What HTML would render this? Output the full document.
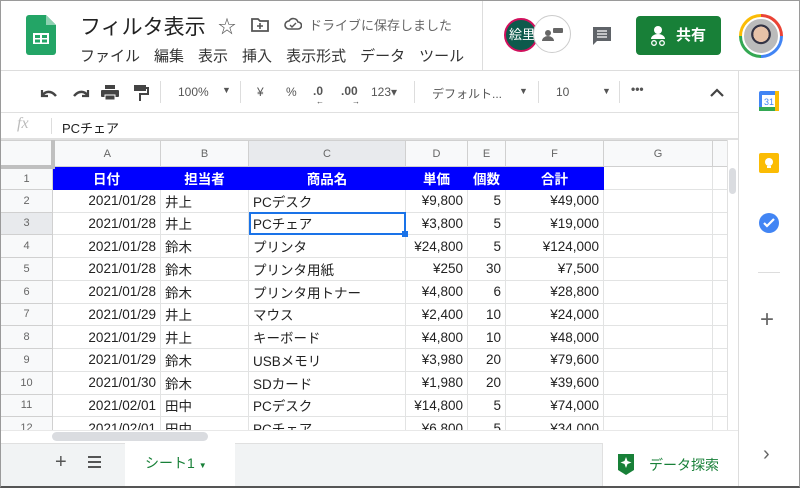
<!DOCTYPE html>
<html><head><meta charset="utf-8"><style>
*{margin:0;padding:0;box-sizing:border-box}
body{width:800px;height:488px;overflow:hidden;background:#fff;font-family:"Liberation Sans","Noto Sans CJK JP",sans-serif;position:relative;color:#222}
.frame{position:absolute;left:0;top:0;width:800px;height:488px;border:1px solid #9a9a9a;border-bottom:2px solid #555;pointer-events:none;z-index:10}
.a{position:absolute}
.menu span{margin-right:14px}
table{border-collapse:collapse;table-layout:fixed;position:absolute;left:0;top:140px;font-size:13.5px}
td{border:1px solid #e2e3e3;height:22.75px;padding:0 4px;white-space:nowrap;overflow:hidden}
td.rh{background:#f8f9fa;color:#666;text-align:center;font-size:11px;border-color:#d0d0d0}
tr.ch td{background:#f8f9fa;color:#666;text-align:center;font-size:11px;height:26px;border-color:#d0d0d0}
tr.h td.b{background:#0000ff;color:#fff;text-align:center;font-weight:bold;border-color:#0000ff}
.r{text-align:right}
.tb{color:#555;font-size:12px}
</style></head><body>
<div class="frame"></div>
<svg class="a" style="left:26px;top:15px" width="30" height="40" viewBox="0 0 30 40"><path d="M3 0h17l10 10v27a3 3 0 0 1-3 3H3a3 3 0 0 1-3-3V3a3 3 0 0 1 3-3z" fill="#23a566"/><path d="M20 0v10h10z" fill="#8ed1b1"/><rect x="7" y="18" width="16" height="11" fill="#fff"/><rect x="9" y="20" width="5" height="3" fill="#23a566"/><rect x="16" y="20" width="5" height="3" fill="#23a566"/><rect x="9" y="24.5" width="5" height="3" fill="#23a566"/><rect x="16" y="24.5" width="5" height="3" fill="#23a566"/></svg>
<div class="a" style="left:80px;top:11px;font-size:21px;color:#222">フィルタ表示</div>
<div class="a" style="left:218px;top:13px;font-size:18px;color:#555">☆</div>
<svg class="a" style="left:251px;top:17px" width="18" height="15"><path d="M1 2h6l2 2h8v10H1z" fill="none" stroke="#555" stroke-width="1.8"/><path d="M9 6v6M6 9h6" stroke="#555" stroke-width="1.6"/></svg>
<svg class="a" style="left:284px;top:17px" width="18" height="14"><path d="M5 12a4 4 0 0 1 0-8 5 5 0 0 1 9 1 3.5 3.5 0 0 1 0 7z" fill="none" stroke="#555" stroke-width="1.6"/><path d="M6 8l2 2 4-4" fill="none" stroke="#555" stroke-width="1.4"/></svg>
<div class="a" style="left:309px;top:15px;font-size:13px;color:#666">ドライブに保存しました</div>
<div class="a menu" style="left:80px;top:45px;font-size:15px;color:#333;white-space:nowrap"><span>ファイル</span><span>編集</span><span>表示</span><span>挿入</span><span>表示形式</span><span>データ</span><span>ツール</span></div>
<div class="a" style="left:482px;top:0;width:1px;height:70px;background:#ddd"></div>
<div class="a" style="left:504px;top:18px;width:34px;height:34px;border-radius:50%;background:#0d5a4c;border:2px solid #d0105c;color:#fff;font-size:13px;line-height:30px;padding-left:3px">絵里</div>
<div class="a" style="left:533px;top:15px;width:38px;height:38px;border-radius:50%;background:#fff;border:1.5px solid #ccc"><svg width="36" height="36"><circle cx="14" cy="17" r="3" fill="#666"/><path d="M8 25a6 5 0 0 1 12 0z" fill="#666"/><rect x="19" y="12" width="10" height="5" rx="1" fill="#666"/></svg></div>
<svg class="a" style="left:591px;top:25px" width="22" height="22"><path d="M2 2h18v14H6l-4 4z" fill="#5f6368"/><path d="M6 6h10M6 9h10M6 12h10" stroke="#fff" stroke-width="1.3"/></svg>
<div class="a" style="left:636px;top:16px;width:85px;height:39px;background:#188038;border-radius:4px;color:#fff;font-size:15px;font-weight:bold;line-height:39px;padding-left:40px">共有</div>
<svg class="a" style="left:648px;top:25px" width="20" height="22"><circle cx="10" cy="5" r="4" fill="#fff"/><path d="M3 14a7 5 0 0 1 14 0z" fill="#fff"/><circle cx="6" cy="18" r="2.3" fill="none" stroke="#fff" stroke-width="1.3"/><circle cx="14" cy="18" r="2.3" fill="none" stroke="#fff" stroke-width="1.3"/></svg>
<div class="a" style="left:739px;top:14px;width:44px;height:44px;border-radius:50%;background:conic-gradient(#ea4335 0 25%,#4285f4 25% 50%,#34a853 50% 75%,#fbbc05 75%);padding:3px"><div style="width:38px;height:38px;border-radius:50%;background:radial-gradient(circle at 50% 45%,#e7c2a8 0 30%,#334 31% 38%,#bbb 40%);border:2px solid #fff"></div></div>
<div class="a" style="left:0;top:70px;width:800px;height:1px;background:#ddd"></div>
<div class="a" style="left:0;top:71px;width:738px;height:42px;background:#fff"></div>
<svg class="a" style="left:38px;top:86px" width="54" height="14"><path d="M4 4v6h6" fill="none" stroke="#444" stroke-width="2.2"/><path d="M4 10c3-5 9-6 14 0" fill="none" stroke="#444" stroke-width="2.4"/><path d="M50 4v6h-6" fill="none" stroke="#444" stroke-width="2.2"/><path d="M50 10c-3-5-9-6-14 0" fill="none" stroke="#444" stroke-width="2.4"/></svg>
<svg class="a" style="left:101px;top:85px" width="18" height="16"><rect x="4" y="0" width="10" height="4" fill="#444"/><rect x="0" y="5" width="18" height="7" rx="1" fill="#444"/><rect x="4" y="10" width="10" height="5" fill="#444" stroke="#fff"/></svg>
<svg class="a" style="left:133px;top:84px" width="16" height="18"><rect x="1" y="1" width="12" height="6" fill="#444"/><path d="M13 4h2v6H7v7" fill="none" stroke="#444" stroke-width="2"/></svg>
<div class="a" style="left:160px;top:81px;width:1px;height:22px;background:#ddd"></div>
<div class="a tb" style="left:178px;top:85px">100%</div><div class="a tb" style="left:222px;top:85px;font-size:9px">▼</div>
<div class="a" style="left:240px;top:81px;width:1px;height:22px;background:#ddd"></div>
<div class="a tb" style="left:257px;top:85px">¥</div><div class="a tb" style="left:286px;top:85px">%</div>
<div class="a tb" style="left:313px;top:84px;font-weight:bold">.0</div><div class="a" style="left:316px;top:97px;font-size:8px;color:#444">←</div>
<div class="a tb" style="left:341px;top:84px;font-weight:bold">.00</div><div class="a" style="left:352px;top:97px;font-size:8px;color:#444">→</div>
<div class="a tb" style="left:371px;top:85px">123▾</div>
<div class="a" style="left:414px;top:81px;width:1px;height:22px;background:#ddd"></div>
<div class="a tb" style="left:432px;top:85px">デフォルト...</div><div class="a tb" style="left:519px;top:86px;font-size:9px">▼</div>
<div class="a" style="left:538px;top:81px;width:1px;height:22px;background:#ddd"></div>
<div class="a tb" style="left:556px;top:85px">10</div><div class="a tb" style="left:602px;top:86px;font-size:9px">▼</div>
<div class="a" style="left:619px;top:81px;width:1px;height:22px;background:#ddd"></div>
<div class="a tb" style="left:631px;top:82px;font-weight:bold">•••</div>
<svg class="a" style="left:710px;top:88px" width="14" height="9"><path d="M1 8l6-6 6 6" fill="none" stroke="#444" stroke-width="2.2"/></svg>
<div class="a" style="left:0;top:112px;width:738px;height:1px;background:#e0e0e0"></div>
<div class="a" style="left:17px;top:115px;font-family:'Liberation Serif',serif;font-style:italic;color:#bbb;font-size:16px">fx</div>
<div class="a" style="left:51px;top:118px;width:1px;height:16px;background:#ddd"></div>
<div class="a" style="left:62px;top:118px;font-size:13px">PCチェア</div>
<div class="a" style="left:0;top:138px;width:738px;height:2px;background:#e0e0e0"></div>
<table>
<colgroup><col style="width:52px"><col style="width:108px"><col style="width:88px"><col style="width:157px"><col style="width:62px"><col style="width:38px"><col style="width:98px"><col style="width:109px"><col style="width:15px"></colgroup>
<tr class="ch"><td style="border-right:4px solid #c0c0c0;border-bottom:4px solid #c0c0c0"></td><td>A</td><td>B</td><td style="background:#e8eaed">C</td><td>D</td><td>E</td><td>F</td><td>G</td><td></td></tr>
<tr class="h"><td class="rh">1</td><td class="b">日付</td><td class="b">担当者</td><td class="b">商品名</td><td class="b r">単価</td><td class="b">個数</td><td class="b">合計</td><td></td><td></td></tr>
<tr><td class="rh">2</td><td class="r">2021/01/28</td><td>井上</td><td>PCデスク</td><td class="r">¥9,800</td><td class="r">5</td><td class="r">¥49,000</td><td></td><td></td></tr>
<tr><td class="rh" style="background:#e8eaed">3</td><td class="r">2021/01/28</td><td>井上</td><td style="outline:2px solid #1a73e8;outline-offset:-2px">PCチェア</td><td class="r">¥3,800</td><td class="r">5</td><td class="r">¥19,000</td><td></td><td></td></tr>
<tr><td class="rh">4</td><td class="r">2021/01/28</td><td>鈴木</td><td>プリンタ</td><td class="r">¥24,800</td><td class="r">5</td><td class="r">¥124,000</td><td></td><td></td></tr>
<tr><td class="rh">5</td><td class="r">2021/01/28</td><td>鈴木</td><td>プリンタ用紙</td><td class="r">¥250</td><td class="r">30</td><td class="r">¥7,500</td><td></td><td></td></tr>
<tr><td class="rh">6</td><td class="r">2021/01/28</td><td>鈴木</td><td>プリンタ用トナー</td><td class="r">¥4,800</td><td class="r">6</td><td class="r">¥28,800</td><td></td><td></td></tr>
<tr><td class="rh">7</td><td class="r">2021/01/29</td><td>井上</td><td>マウス</td><td class="r">¥2,400</td><td class="r">10</td><td class="r">¥24,000</td><td></td><td></td></tr>
<tr><td class="rh">8</td><td class="r">2021/01/29</td><td>井上</td><td>キーボード</td><td class="r">¥4,800</td><td class="r">10</td><td class="r">¥48,000</td><td></td><td></td></tr>
<tr><td class="rh">9</td><td class="r">2021/01/29</td><td>鈴木</td><td>USBメモリ</td><td class="r">¥3,980</td><td class="r">20</td><td class="r">¥79,600</td><td></td><td></td></tr>
<tr><td class="rh">10</td><td class="r">2021/01/30</td><td>鈴木</td><td>SDカード</td><td class="r">¥1,980</td><td class="r">20</td><td class="r">¥39,600</td><td></td><td></td></tr>
<tr><td class="rh">11</td><td class="r">2021/02/01</td><td>田中</td><td>PCデスク</td><td class="r">¥14,800</td><td class="r">5</td><td class="r">¥74,000</td><td></td><td></td></tr>
<tr><td class="rh">12</td><td class="r">2021/02/01</td><td>田中</td><td>PCチェア</td><td class="r">¥6,800</td><td class="r">5</td><td class="r">¥34,000</td><td></td><td></td></tr>
</table>
<div class="a" style="left:402px;top:231px;width:6px;height:6px;background:#1a73e8"></div>
<div class="a" style="left:727px;top:140px;width:12px;height:293px;background:#fff;border-left:1px solid #e0e0e0"></div>
<div class="a" style="left:729px;top:168px;width:7px;height:26px;background:#dadce0;border-radius:4px"></div>
<div class="a" style="left:0;top:430px;width:738px;height:14px;background:#fff;border-top:1px solid #e8e8e8"></div>
<div class="a" style="left:52px;top:432px;width:156px;height:9px;background:#dadce0;border-radius:5px"></div>
<div class="a" style="left:0;top:443px;width:738px;height:44px;background:#f1f3f4;border-top:1px solid #e0e0e0"></div>
<div class="a" style="left:55px;top:451px;font-size:20px;color:#555">+</div>
<div class="a" style="left:88px;top:456px;width:13px;height:12px;border-top:2px solid #555;border-bottom:2px solid #555"><div style="margin-top:3px;height:2px;background:#555"></div></div>
<div class="a" style="left:125px;top:443px;width:110px;height:44px;background:#fff;color:#188038;font-size:14px;line-height:40px;padding-left:20px">シート1 <span style="font-size:8px">▼</span></div>
<div class="a" style="left:602px;top:443px;width:136px;height:44px;background:#fff;border-left:1px solid #e0e0e0"></div>
<svg class="a" style="left:616px;top:452px" width="20" height="24"><path d="M2 2h16v16l-8 5-8-5z" fill="#188038"/><path d="M10 5l1.5 4 4 1.5-4 1.5-1.5 4-1.5-4-4-1.5 4-1.5z" fill="#fff"/></svg>
<div class="a" style="left:649px;top:455px;font-size:14px;color:#188038">データ探索</div>
<div class="a" style="left:738px;top:71px;width:1px;height:416px;background:#ddd"></div>
<svg class="a" style="left:758px;top:90px" width="22" height="22"><rect x="1" y="1" width="20" height="20" rx="2" fill="#4285f4"/><rect x="4" y="5" width="14" height="13" fill="#fff"/><rect x="1" y="17" width="20" height="4" fill="#34a853"/><rect x="17" y="1" width="4" height="20" fill="#fbbc05"/><text x="6" y="15" font-size="9" fill="#4285f4" font-family="Liberation Sans">31</text></svg>
<svg class="a" style="left:758px;top:152px" width="22" height="22"><rect x="1" y="1" width="20" height="20" rx="2" fill="#fbbc04"/><circle cx="11" cy="10" r="4" fill="#fff"/><rect x="9" y="14" width="4" height="2" fill="#fff"/></svg>
<svg class="a" style="left:758px;top:212px" width="22" height="22"><circle cx="11" cy="11" r="10" fill="#4285f4"/><path d="M6 11l3 3 7-7" fill="none" stroke="#fff" stroke-width="2.2"/></svg>
<div class="a" style="left:758px;top:272px;width:22px;height:1px;background:#ddd"></div>
<div class="a" style="left:760px;top:306px;font-size:24px;color:#666">+</div>
<div class="a" style="left:763px;top:443px;font-size:20px;color:#666">›</div>
</body></html>
